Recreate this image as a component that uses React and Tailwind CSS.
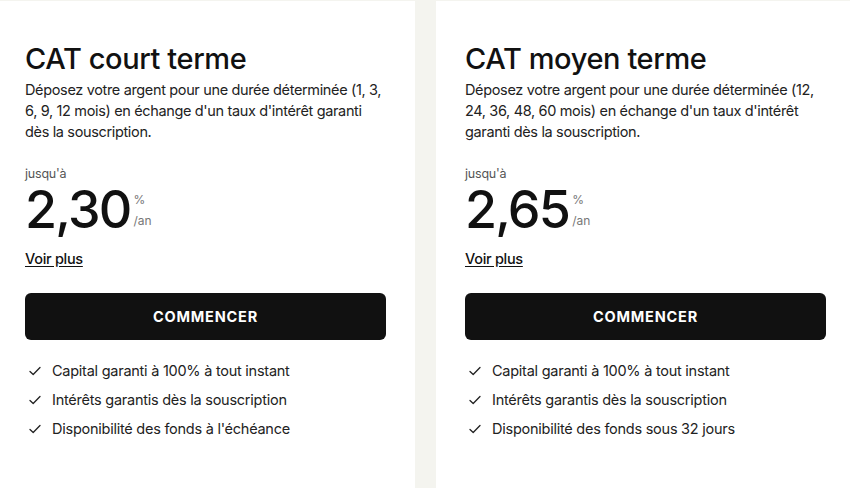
import React from "react";

function Check() {
  return (
    <svg width="12" height="10" viewBox="0 0 12 10" fill="none" className="shrink-0">
      <path d="M1 5.5 L4.2 8.5 L11 1.5" stroke="#222" strokeWidth="1.3" strokeLinecap="round" strokeLinejoin="round" />
    </svg>
  );
}

function Card({ title, desc, rate, features, className }) {
  return (
    <div className={"bg-white pt-[40px] " + className}>
      <div className="w-[361px]">
        <h2 className="text-[29px] leading-[36px] font-medium text-[#111] tracking-[-0.4px]">{title}</h2>
        <p className="mt-[2px] text-[14.5px] leading-[21px] text-[#222] tracking-[-0.35px]">{desc}</p>
        <div className="mt-[24px] text-[12.5px] leading-[16px] text-[#555] tracking-[-0.2px]">jusqu'à</div>
        <div className="flex items-start">
          <span className="text-[52px] leading-[56px] font-medium text-[#111] tracking-[-1.8px]">{rate}</span>
          <div className="ml-[3px] mt-[11px] flex flex-col text-[12px] leading-[14px] text-[#777]">
            <span>%</span>
            <span className="mt-[7px]">/an</span>
          </div>
        </div>
        <a className="inline-block mt-[11px] text-[14.5px] leading-[20px] font-medium text-[#111] underline underline-offset-2 tracking-[-0.3px]">Voir plus</a>
        <button className="mt-[23px] w-full h-[47px] rounded-[6px] bg-[#111] text-white text-[14.5px] font-bold tracking-[0.8px]">COMMENCER</button>
        <ul className="mt-[20px] flex flex-col gap-[8px]">
          {features.map((f) => (
            <li key={f} className="flex items-center gap-[11px] pl-[4px] text-[14.5px] leading-[21px] text-[#222] tracking-[-0.25px]">
              <Check />
              <span>{f}</span>
            </li>
          ))}
        </ul>
      </div>
    </div>
  );
}

export default function App() {
  return (
    <div className="w-[850px] h-[488px] bg-[#f4f4ef] pt-[1px] flex overflow-hidden" style={{ fontFamily: "Inter, 'Liberation Sans', sans-serif" }}>
      <Card
        className="w-[415px] pl-[25px]"
        title="CAT court terme"
        desc="Déposez votre argent pour une durée déterminée (1, 3, 6, 9, 12 mois) en échange d'un taux d'intérêt garanti dès la souscription."
        rate="2,30"
        features={["Capital garanti à 100% à tout instant", "Intérêts garantis dès la souscription", "Disponibilité des fonds à l'échéance"]}
      />
      <div className="w-[21px] shrink-0" />
      <Card
        className="w-[414px] pl-[29px]"
        title="CAT moyen terme"
        desc="Déposez votre argent pour une durée déterminée (12, 24, 36, 48, 60 mois) en échange d'un taux d'intérêt garanti dès la souscription."
        rate="2,65"
        features={["Capital garanti à 100% à tout instant", "Intérêts garantis dès la souscription", "Disponibilité des fonds sous 32 jours"]}
      />
    </div>
  );
}
